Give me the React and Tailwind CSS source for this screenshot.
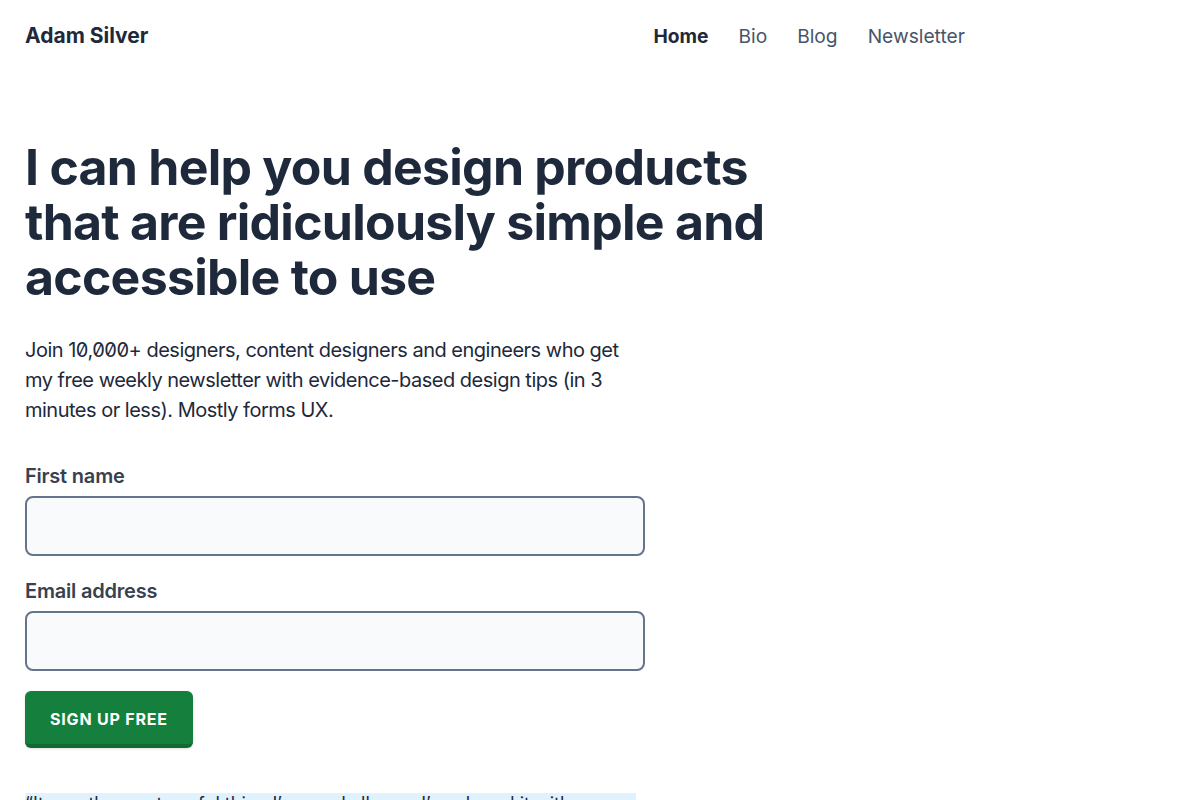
import React from "react";

const navLinks = [
  { label: "Home", active: true },
  { label: "Bio" },
  { label: "Blog" },
  { label: "Newsletter" },
];

const Field = ({ id, label, type = "text" }) => (
  <div className="flex flex-col">
    <label htmlFor={id} className="text-[20px] leading-[30px] font-semibold text-[#374151] tracking-[-0.01em]">
      {label}
    </label>
    <input
      id={id}
      type={type}
      className="mt-[5px] h-[60px] w-[620px] rounded-lg border-2 border-[#64748b] bg-[#f8fafc] px-3 text-[20px] outline-none"
    />
  </div>
);

export default function App() {
  return (
    <div className="h-[800px] overflow-hidden bg-white text-[#1e293b] font-['Inter',sans-serif]">
      {/* Header */}
      <header className="flex items-center h-[70px] pt-[2px] px-[25px]">
        <a href="#" className="text-[21px] font-bold text-[#1e293b]">
          Adam Silver
        </a>
        <nav className="ml-[505px] flex items-center gap-[30px] text-[19.2px]">
          {navLinks.map((link) => (
            <a
              key={link.label}
              href="#"
              className={link.active ? "font-bold text-[#1e293b]" : "text-[#475569]"}
            >
              {link.label}
            </a>
          ))}
        </nav>
      </header>

      <main className="px-[25px] pt-[70px]">
        <h1 className="text-[50px] leading-[55px] font-bold tracking-[-0.015em] max-w-[760px]">
          I can help you design products that are ridiculously simple and accessible to use
        </h1>

        <p className="mt-[30px] max-w-[620px] text-[20px] leading-[30px] tracking-[-0.025em] text-[#1e293b]">
          Join <span className="slashed-zero">10,000+</span> designers, content designers and engineers who get my free
          weekly newsletter with evidence-based design tips (in 3 minutes or less). Mostly forms UX.
        </p>

        <form className="mt-[36px] flex flex-col gap-[20px]" onSubmit={(e) => e.preventDefault()}>
          <Field id="first-name" label="First name" />
          <Field id="email" label="Email address" type="email" />
          <div>
            <button
              type="submit"
              className="h-[57px] pt-[2px] px-[25px] rounded-md bg-[#15803d] border-b-4 border-[#116a32] text-white text-[16px] font-bold uppercase tracking-[0.05em] shadow-sm"
            >
              Sign up free
            </button>
          </div>
        </form>

        <blockquote className="mt-[45px] w-[611px] bg-[#e0f2fe] text-[18px] leading-[22px] text-[#1e293b]">
          “It was the most useful thing I’ve read all year. I’ve shared it with my whole team.”
        </blockquote>
      </main>
    </div>
  );
}
